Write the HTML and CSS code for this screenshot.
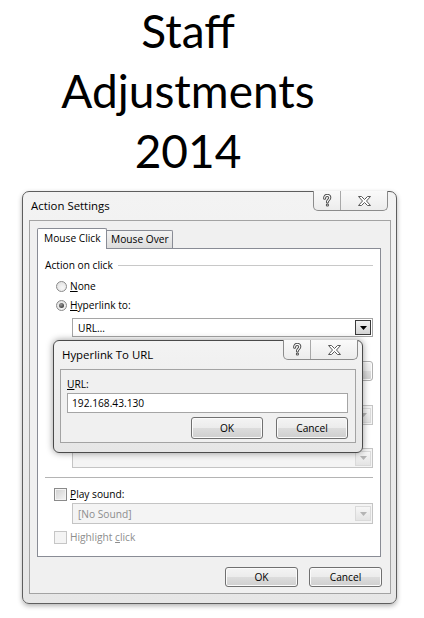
FILE: index.html
```html
<!DOCTYPE html>
<html>
<head>
<meta charset="utf-8">
<title>Staff Adjustments 2014</title>
<link rel="stylesheet" href="styles.css">
</head>
<body>
<div class="page">
  <h1 class="title">Staff<br>Adjustments<br>2014</h1>
  <div class="stage">
    <div class="window main">
      <div class="titlebar">
        <span class="caption">Action Settings</span>
        <div class="capbtns">
          <span class="cb help"><svg width="10" height="13" viewBox="0 0 10 13"><path d="M2.6 4.2 C2.6 2.2 3.8 1.4 5.2 1.4 C6.8 1.4 7.8 2.4 7.8 3.8 C7.8 5.6 5.4 6 5.4 8" fill="none" stroke="#4a4a4a" stroke-width="3" stroke-linecap="round"/><path d="M2.6 4.2 C2.6 2.2 3.8 1.4 5.2 1.4 C6.8 1.4 7.8 2.4 7.8 3.8 C7.8 5.6 5.4 6 5.4 8" fill="none" stroke="#fff" stroke-width="1.1" stroke-linecap="round"/><circle cx="5.4" cy="11" r="1.6" fill="#4a4a4a"/><circle cx="5.4" cy="11" r="0.6" fill="#fff"/></svg></span>
          <span class="cb close"><svg width="13" height="10" viewBox="0 0 13 10"><polygon points="0.5,0.5 3.5,0.5 6.5,3.5 9.5,0.5 12.5,0.5 8.5,5 12.5,9.5 9.5,9.5 6.5,6.5 3.5,9.5 0.5,9.5 4.5,5" fill="#fff" stroke="#5a5a5a" stroke-width="1"/></svg></span>
        </div>
      </div>
      <div class="client">
        <div class="tabs">
          <div class="tab active">Mouse Click</div>
          <div class="tab">Mouse Over</div>
        </div>
        <div class="panel">
          <div class="group-head"><span>Action on click</span><span class="rule"></span></div>
          <div class="opt r1"><span class="radio"></span><span><u>N</u>one</span></div>
          <div class="opt r2"><span class="radio on"></span><span><u>H</u>yperlink to:</span></div>
          <div class="combo c1"><span class="val">URL…</span><span class="drop focus"><svg width="7" height="4" viewBox="0 0 7 4"><polygon points="0,0 7,0 3.5,4" fill="#000"/></svg></span></div>
          <div class="opt r3"><span class="radio"></span></div>
          <div class="fieldrow">
            <div class="textbox dis"></div>
            <div class="btn browse"></div>
          </div>
          <div class="opt r3"><span class="radio"></span></div>
          <div class="combo dis c2"><span class="val"></span><span class="drop"><svg width="7" height="4" viewBox="0 0 7 4"><polygon points="0,0 7,0 3.5,4" fill="#b4b4b4"/></svg></span></div>
          <div class="opt r3"><span class="radio"></span></div>
          <div class="combo dis c3"><span class="val"></span><span class="drop"><svg width="7" height="4" viewBox="0 0 7 4"><polygon points="0,0 7,0 3.5,4" fill="#b4b4b4"/></svg></span></div>
          <div class="sep"></div>
          <div class="opt chk1"><span class="check"></span><span><u>P</u>lay sound:</span></div>
          <div class="combo dis c4"><span class="val">[No Sound]</span><span class="drop"><svg width="7" height="4" viewBox="0 0 7 4"><polygon points="0,0 7,0 3.5,4" fill="#b4b4b4"/></svg></span></div>
          <div class="opt chk2 disabled"><span class="check dis"></span><span>Highlight <u>c</u>lick</span></div>
        </div>
        <div class="buttons">
          <div class="btn">OK</div>
          <div class="btn">Cancel</div>
        </div>
      </div>
    </div>

    <div class="window sub">
      <div class="titlebar">
        <span class="caption">Hyperlink To URL</span>
        <div class="capbtns">
          <span class="cb help"><svg width="10" height="13" viewBox="0 0 10 13"><path d="M2.6 4.2 C2.6 2.2 3.8 1.4 5.2 1.4 C6.8 1.4 7.8 2.4 7.8 3.8 C7.8 5.6 5.4 6 5.4 8" fill="none" stroke="#4a4a4a" stroke-width="3" stroke-linecap="round"/><path d="M2.6 4.2 C2.6 2.2 3.8 1.4 5.2 1.4 C6.8 1.4 7.8 2.4 7.8 3.8 C7.8 5.6 5.4 6 5.4 8" fill="none" stroke="#fff" stroke-width="1.1" stroke-linecap="round"/><circle cx="5.4" cy="11" r="1.6" fill="#4a4a4a"/><circle cx="5.4" cy="11" r="0.6" fill="#fff"/></svg></span>
          <span class="cb close"><svg width="13" height="10" viewBox="0 0 13 10"><polygon points="0.5,0.5 3.5,0.5 6.5,3.5 9.5,0.5 12.5,0.5 8.5,5 12.5,9.5 9.5,9.5 6.5,6.5 3.5,9.5 0.5,9.5 4.5,5" fill="#fff" stroke="#5a5a5a" stroke-width="1"/></svg></span>
        </div>
      </div>
      <div class="client">
        <div class="lbl"><u>U</u>RL:</div>
        <div class="textbox url">192.168.43.130</div>
        <div class="buttons">
          <div class="btn">OK</div>
          <div class="btn">Cancel</div>
        </div>
      </div>
    </div>
  </div>
</div>
</body>
</html>
```

FILE: styles.css
```css
html, body {
  margin: 0;
  padding: 0;
  background: #ffffff;
}

body {
  font-family: "Open Sans", "Noto Sans", "Liberation Sans", sans-serif;
  font-size: 10.2px;
  color: #000;
}

.page {
  width: 424px;
  height: 618px;
  overflow: hidden;
}

.title {
  margin: 1px 0 0 0;
  padding-right: 48px;
  text-align: center;
  font-family: Lato, "Open Sans", sans-serif;
  font-weight: 400;
  font-size: 46px;
  line-height: 60px;
  height: 180px;
  color: #000;
}

.stage {
  position: relative;
  margin-top: 10px;
}

/* ---------- windows ---------- */
.window {
  box-sizing: border-box;
  border: 1px solid #5e5e5e;
  border-radius: 7px;
  background: linear-gradient(#f3f3f3, #e6e6e6);
}

.window.main {
  margin-left: 22px;
  width: 375px;
  height: 413px;
  box-shadow: 0 2px 5px rgba(0, 0, 0, 0.3);
  padding-bottom: 8px;
}

.titlebar {
  display: flex;
  align-items: flex-start;
  height: 28px;
  padding-left: 8px;
}

.caption {
  flex: 1;
  font-size: 11.4px;
  line-height: 28px;
  color: #000;
}

.capbtns {
  display: flex;
  margin-top: -1px;
  height: 20px;
  box-sizing: border-box;
  border: 1px solid #8c8c8c;
  border-top: none;
  border-radius: 0 0 5px 5px;
  background: linear-gradient(#fafafa, #ececec);
}

.main .capbtns { margin-right: 8px; }
.sub .capbtns { margin-right: 4px; }

.cb {
  display: flex;
  align-items: center;
  justify-content: center;
  height: 100%;
}

.cb.help {
  width: 26px;
  border-right: 1px solid #a8a8a8;
}

.cb.close {
  width: 46px;
}

.client {
  box-sizing: border-box;
  border: 1px solid #a3a3a3;
  background: #f0f0f0;
}

.main .client {
  margin: 0 5px 0 6px;
  height: 374px;
  padding: 7px 9px 0 7px;
}

/* ---------- tabs ---------- */
.tabs {
  display: flex;
  align-items: flex-end;
  height: 20px;
  position: relative;
  z-index: 1;
}

.tab {
  box-sizing: border-box;
  height: 18px;
  border: 1px solid #898c95;
  border-bottom: none;
  line-height: 17px;
  white-space: nowrap;
}

.tab.active {
  width: 70px;
  height: 21px;
  margin-bottom: -1px;
  background: #ffffff;
  padding-left: 6px;
  line-height: 19px;
  border-radius: 2px 2px 0 0;
}

.tab:not(.active) {
  width: 66px;
  border-left: none;
  background: linear-gradient(#f4f4f4, #dcdcdc);
  padding-left: 4px;
  border-radius: 0 2px 0 0;
}

.panel {
  box-sizing: border-box;
  height: 309px;
  border: 1px solid #898c95;
  background: #ffffff;
  padding: 8px 7px 0 7px;
}

.group-head {
  display: flex;
  align-items: center;
  height: 16px;
}

.rule {
  flex: 1;
  height: 1px;
  background: #c8c8c8;
  margin-left: 5px;
}

.opt {
  display: flex;
  align-items: center;
  height: 18px;
  padding-left: 11px;
  white-space: nowrap;
}

.opt.r1 { margin-top: 4px; }
.opt.r2 { margin-top: 1px; }
.opt.r3 { margin-top: 4px; }
.opt.chk1 { margin-top: 7px; padding-left: 9px; }
.opt.chk2 { margin-top: 4px; padding-left: 9px; }
.opt.disabled { color: #8d8d8d; }

.radio {
  position: relative;
  box-sizing: border-box;
  width: 11px;
  height: 11px;
  border-radius: 50%;
  border: 1px solid #8a8a8a;
  background: radial-gradient(circle at 60% 65%, #f8f8f8 0%, #dcdcdc 100%);
  margin-right: 3px;
}

.radio.on::after {
  content: "";
  position: absolute;
  left: 2px;
  top: 2px;
  width: 5px;
  height: 5px;
  border-radius: 50%;
  background: radial-gradient(circle at 40% 35%, #9a9a9a, #202020);
}

.check {
  box-sizing: border-box;
  width: 13px;
  height: 13px;
  border: 1px solid #8a8a8a;
  background: linear-gradient(135deg, #cfcfcf, #f6f6f6);
  box-shadow: inset 0 0 0 1px #f4f4f4;
  margin-right: 3px;
}

.check.dis {
  border-color: #c6c6c6;
  background: #f4f4f4;
  box-shadow: none;
}

/* ---------- combos & fields ---------- */
.combo {
  box-sizing: border-box;
  display: flex;
  align-items: center;
  margin-left: 27px;
  height: 20px;
  border: 1px solid #a5a5a5;
  background: #ffffff;
  padding: 0 1px 0 5px;
}

.combo .val { flex: 1; white-space: nowrap; }

.combo.c1 { margin-top: 4px; height: 19px; }
.combo.c2 { margin-top: 2px; }
.combo.c3 { margin-top: 1px; }
.combo.c4 { margin-top: 0; height: 21px; }

.combo.dis {
  background: #f4f4f4;
  border-color: #c4c4c4;
  color: #8d8d8d;
}

.drop {
  box-sizing: border-box;
  display: flex;
  align-items: center;
  justify-content: center;
  width: 16px;
  height: 15px;
  border: 1px solid #dadada;
  background: linear-gradient(#f6f6f6, #e4e4e4);
}

.drop.focus {
  border: 1px solid #3a3a3a;
  background: linear-gradient(#f2f2f2, #d4d4d4);
}

.fieldrow {
  display: flex;
  margin-left: 27px;
  margin-top: 2px;
  height: 20px;
  gap: 8px;
}

.textbox {
  box-sizing: border-box;
  border: 1px solid #a5a5a5;
  background: #fff;
  height: 20px;
}

.textbox.dis {
  flex: 1;
  background: #f4f4f4;
  border-color: #c4c4c4;
}

.sep {
  margin-top: 9px;
  height: 1px;
  background: #b4b4b4;
}

/* ---------- buttons ---------- */
.btn {
  box-sizing: border-box;
  display: flex;
  align-items: center;
  justify-content: center;
  width: 73px;
  height: 20px;
  border: 1px solid #707070;
  border-radius: 3px;
  background: linear-gradient(#f4f4f4 0%, #ececec 48%, #dcdcdc 52%, #cfcfcf 100%);
  box-shadow: inset 0 0 0 1px #fbfbfb;
  color: #000;
}

.btn.browse {
  width: 72px;
  border-color: #b0b0b0;
}

.buttons {
  display: flex;
  justify-content: flex-end;
  gap: 11px;
}

.main .buttons {
  margin-top: 10px;
  margin-right: -1px;
}

/* ---------- hyperlink dialog ---------- */
.window.sub {
  position: absolute;
  left: 53px;
  top: 149px;
  width: 310px;
  height: 113px;
  border-color: #4a4a4a;
  border-radius: 6px;
  box-shadow: 0 0 7px rgba(0, 0, 0, 0.4);
}

.sub .client {
  margin: 0 6px 0 6px;
  height: 74px;
  padding: 7px 7px 0 6px;
}

.lbl {
  height: 15px;
  line-height: 15px;
}

.textbox.url {
  margin-top: 1px;
  height: 20px;
  line-height: 18px;
  padding-left: 4px;
}

.sub .buttons {
  margin-top: 4px;
  gap: 13px;
}

.sub .btn {
  width: 72px;
  height: 22px;
}
```
